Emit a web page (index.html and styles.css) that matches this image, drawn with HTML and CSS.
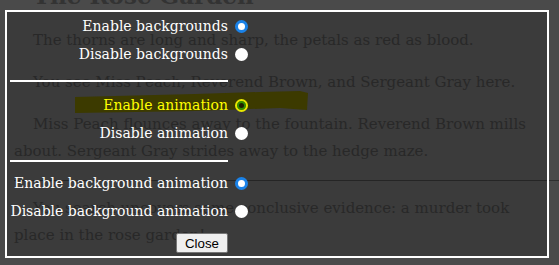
FILE: index.html
```html
<!DOCTYPE html>
<html>

<head>
    <meta charset="utf-8" />
    <title>The Rose Garden</title>
    <link rel="stylesheet" href="styles.css">
</head>

<body>
    <div class="story">
        <h1 class="story-title">The Rose Garden</h1>
        <p>The thorns are long and sharp, the petals as red as blood.</p>
        <p>You see Miss Peach, Reverend Brown, and Sergeant Gray here.</p>
        <p>Miss Peach flounces away to the fountain. Reverend Brown mills about. Sergeant Gray strides away to the hedge maze.</p>
        <hr class="story-rule">
        <p>You search uncovers some conclusive evidence: a murder took place in the rose garden!</p>
    </div>

    <div class="settings">
        <svg class="marker" width="240" height="26" viewBox="0 0 240 26">
            <polygon points="0,6 120,3 185,1 225,0 233,2 232,19 205,17 120,20 0,22" />
        </svg>
        <form class="settings-grid">
            <label class="opt">Enable backgrounds</label>
            <input type="radio" class="radio" name="bg" checked>
            <label class="opt">Disable backgrounds</label>
            <input type="radio" class="radio" name="bg">

            <hr class="settings-rule rule-1">
            <span></span>

            <label class="opt opt-active">Enable animation</label>
            <input type="radio" class="radio radio-active" name="anim" checked>
            <label class="opt">Disable animation</label>
            <input type="radio" class="radio" name="anim">

            <hr class="settings-rule rule-2">
            <span></span>

            <label class="opt">Enable background animation</label>
            <input type="radio" class="radio" name="bganim" checked>
            <label class="opt">Disable background animation</label>
            <input type="radio" class="radio" name="bganim">

            <button type="button" class="close-btn">Close</button>
        </form>
    </div>
</body>

</html>
```

FILE: styles.css
```css
/* Страница под диалогом */
body {
    margin: 0;
    background-color: #4a4a4a;
    color: #333;
    font-family: 'DejaVu Serif', serif;
    overflow: hidden;
    position: relative;
    height: 265px;
}

.story {
    padding: 0 20px 0 14px;
}

.story-title {
    font-size: 23px;
    line-height: 24px;
    margin: -16px 0 19px;
    padding-left: 19px;
}

.story p {
    font-size: 15px;
    line-height: 27px;
    margin: 0 0 15px;
    text-indent: 19px;
}

.story-rule {
    border: none;
    border-top: 1px solid #2f2f2f;
    margin: 14px -20px 14px 0;
}

/* Окно настроек */
.settings {
    position: absolute;
    left: 5px;
    top: 10px;
    width: 540px;
    height: 244px;
    border: 2px solid #fff;
    background: rgba(0, 0, 0, 0.2);
}

.marker {
    position: absolute;
    left: 68px;
    top: 79px;
}

.marker polygon {
    fill: #3c3a00;
}

.settings-grid {
    position: relative;
    display: grid;
    grid-template-columns: 218px auto;
    grid-template-rows: 28px 28px auto 28px 28px auto 28px 28px auto;
    align-items: center;
    padding-left: 3px;
    margin: 0;
    font-family: 'DejaVu Serif', serif;
    font-size: 14px;
    color: #fff;
}

.opt {
    text-align: right;
    white-space: nowrap;
}

.opt-active {
    color: #ffff00;
}

.radio {
    appearance: none;
    width: 13px;
    height: 13px;
    margin: 0 0 0 7px;
    border-radius: 50%;
    background: #fff;
    box-sizing: border-box;
}

.radio:checked {
    border: 3px solid #1a82e8;
}

.radio-active:checked {
    border: 2px solid #e8e800;
    background: #1f1f00;
    box-shadow: inset 0 0 0 2px #2f8f00;
}

.settings-rule {
    border: none;
    border-top: 2px solid #fff;
    margin: 0;
}

.rule-1 {
    margin: 12px 0 9px;
}

.rule-2 {
    margin: 13px 0 7px;
}

.close-btn {
    grid-column: 1;
    justify-self: end;
    margin-top: 8px;
    font-family: 'Liberation Sans', Arial, sans-serif;
    font-size: 13.3px;
    padding: 1px 8px;
    height: 20px;
    background: #efefef;
    border: 1px solid #767676;
    border-radius: 2px;
    color: #000;
}
```
